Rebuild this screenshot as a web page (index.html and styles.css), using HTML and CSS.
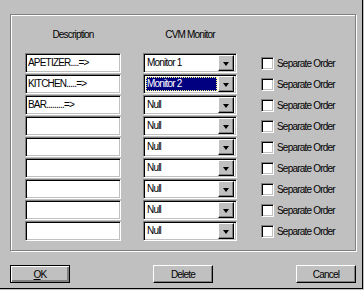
FILE: index.html
```html
<!DOCTYPE html>
<html lang="en">
<head>
    <meta charset="UTF-8">
    <title>CVM Monitor Setup</title>
    <link rel="stylesheet" href="styles.css">
</head>
<body>
    <div class="dialog">
        <div class="group">
            <div class="grid head">
                <div class="col-title">Description</div>
                <div class="col-title">CVM Monitor</div>
                <div></div>
            </div>

            <div class="grid rows">
                <div class="field">APETIZER....=&gt;</div>
                <div class="combo"><span class="value">Monitor 1</span><span class="arrow"></span></div>
                <label class="check"><span class="box"></span>Separate Order</label>

                <div class="field">KITCHEN.....=&gt;</div>
                <div class="combo focused"><span class="value">Monitor 2</span><span class="arrow"></span></div>
                <label class="check"><span class="box"></span>Separate Order</label>

                <div class="field">BAR.........=&gt;</div>
                <div class="combo"><span class="value">Null</span><span class="arrow"></span></div>
                <label class="check"><span class="box"></span>Separate Order</label>

                <div class="field"></div>
                <div class="combo"><span class="value">Null</span><span class="arrow"></span></div>
                <label class="check"><span class="box"></span>Separate Order</label>

                <div class="field"></div>
                <div class="combo"><span class="value">Null</span><span class="arrow"></span></div>
                <label class="check"><span class="box"></span>Separate Order</label>

                <div class="field"></div>
                <div class="combo"><span class="value">Null</span><span class="arrow"></span></div>
                <label class="check"><span class="box"></span>Separate Order</label>

                <div class="field"></div>
                <div class="combo"><span class="value">Null</span><span class="arrow"></span></div>
                <label class="check"><span class="box"></span>Separate Order</label>

                <div class="field"></div>
                <div class="combo"><span class="value">Null</span><span class="arrow"></span></div>
                <label class="check"><span class="box"></span>Separate Order</label>

                <div class="field"></div>
                <div class="combo"><span class="value">Null</span><span class="arrow"></span></div>
                <label class="check"><span class="box"></span>Separate Order</label>
            </div>
        </div>

        <div class="buttons">
            <button class="btn default"><u>O</u>K</button>
            <button class="btn">Delete</button>
            <button class="btn">Cancel</button>
        </div>
    </div>
</body>
</html>
```

FILE: styles.css
```css
body {
    margin: 0;
    background-color: #c0c0c0;
    font-family: "Liberation Sans", Arial, sans-serif;
    font-size: 10px;
    letter-spacing: -0.8px;
    color: #000;
}

.dialog {
    width: 363px;
    height: 289px;
    box-sizing: border-box;
    padding: 14px 0 0 10px;
    border-right: 1px solid #000;
    border-bottom: 1px solid #000;
}

/* Etched group frame */
.group {
    width: 346px;
    height: 237px;
    box-sizing: border-box;
    border: 1px solid #808080;
    box-shadow: inset 1px 1px 0 #fff, 1px 1px 0 #fff;
    padding: 13px 0 0 14px;
}

.grid {
    display: grid;
    grid-template-columns: 96px 94px auto;
    column-gap: 22px;
}

.head {
    height: 13px;
    margin-bottom: 12px;
}

.col-title {
    text-align: center;
    line-height: 13px;
}

.rows {
    grid-auto-rows: 20px;
    row-gap: 1px;
}

/* Sunken text box */
.field,
.combo {
    box-sizing: border-box;
    height: 20px;
    background-color: #fff;
    border: 1px solid;
    border-color: #808080 #fff #fff #808080;
    box-shadow: inset 1px 1px 0 #000, inset -1px -1px 0 #c0c0c0;
    padding: 0 2px 0 2px;
    line-height: 18px;
    white-space: nowrap;
    overflow: hidden;
}

.combo {
    display: flex;
    align-items: center;
    padding: 2px 2px 2px 2px;
}

.combo .value {
    flex: 1;
    height: 14px;
    line-height: 14px;
    padding-left: 1px;
}

.combo.focused .value {
    background-color: #000080;
    color: #fff;
    outline: 1px dotted #ffff80;
    outline-offset: -1px;
    margin-right: 1px;
}

.arrow {
    width: 16px;
    height: 16px;
    box-sizing: border-box;
    background-color: #c0c0c0;
    border: 1px solid;
    border-color: #fff #000 #000 #fff;
    box-shadow: inset -1px -1px 0 #808080;
    display: flex;
    align-items: center;
    justify-content: center;
}

.arrow::after {
    content: "";
    border-left: 3px solid transparent;
    border-right: 3px solid transparent;
    border-top: 4px solid #000;
    margin-top: 1px;
}

.check {
    display: flex;
    align-items: center;
    margin-left: 2px;
}

.box {
    width: 13px;
    height: 13px;
    box-sizing: border-box;
    background-color: #fff;
    border: 1px solid;
    border-color: #808080 #fff #fff #808080;
    box-shadow: inset 1px 1px 0 #000, inset -1px -1px 0 #c0c0c0;
    margin-right: 3px;
}

.buttons {
    width: 346px;
    display: flex;
    justify-content: space-between;
    margin-top: 14px;
}

.btn {
    width: 60px;
    height: 18px;
    box-sizing: border-box;
    padding: 0;
    font: inherit;
    letter-spacing: inherit;
    background-color: #c0c0c0;
    border: 1px solid;
    border-color: #fff #000 #000 #fff;
    box-shadow: inset -1px -1px 0 #808080;
    color: #000;
}

.btn.default {
    border-color: #000;
    box-shadow: inset 1px 1px 0 #fff, inset -2px -2px 0 #808080;
}
```
